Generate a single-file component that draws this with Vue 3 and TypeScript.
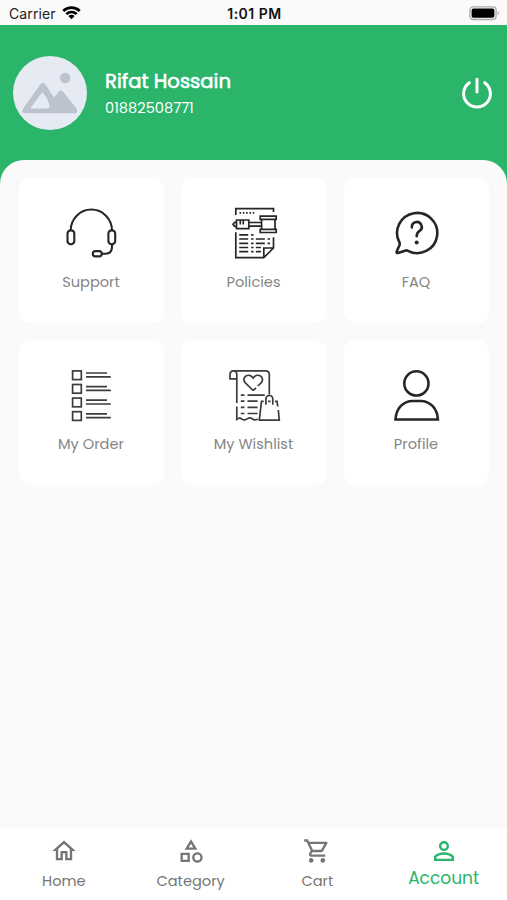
<script setup lang="ts">
import { ref } from 'vue'

interface Tile {
  id: string
  label: string
}

interface Tab {
  id: string
  label: string
  path: string
}

const tiles: Tile[] = [
  { id: 'support', label: 'Support' },
  { id: 'policies', label: 'Policies' },
  { id: 'faq', label: 'FAQ' },
  { id: 'order', label: 'My Order' },
  { id: 'wishlist', label: 'My Wishlist' },
  { id: 'profile', label: 'Profile' },
]

const tabs: Tab[] = [
  {
    id: 'home',
    label: 'Home',
    path: 'M12 5.69l5 4.5V18h-2v-6H9v6H7v-7.81l5-4.5M12 3L2 12h3v8h6v-6h2v6h6v-8h3L12 3z',
  },
  {
    id: 'category',
    label: 'Category',
    path: 'M12 2l-5.5 9h11L12 2zm0 3.84L13.93 9h-3.87L12 5.84zM17.5 13c-2.49 0-4.5 2.01-4.5 4.5s2.01 4.5 4.5 4.5 4.5-2.01 4.5-4.5-2.01-4.5-4.5-4.5zm0 7a2.5 2.5 0 0 1 0-5 2.5 2.5 0 0 1 0 5zM3 21.5h8v-8H3v8zm2-6h4v4H5v-4z',
  },
  {
    id: 'cart',
    label: 'Cart',
    path: 'M15.55 13c.75 0 1.41-.41 1.75-1.03l3.58-6.49A.996.996 0 0 0 20.01 4H5.21l-.94-2H1v2h2l3.6 7.59-1.35 2.44C4.52 15.37 5.48 17 7 17h12v-2H7l1.1-2h7.45zM6.16 6h12.15l-2.76 5H8.53L6.16 6zM7 18c-1.1 0-1.99.9-1.99 2S5.9 22 7 22s2-.9 2-2-.9-2-2-2zm10 0c-1.1 0-1.99.9-1.99 2s.89 2 1.99 2 2-.9 2-2-.9-2-2-2z',
  },
  {
    id: 'account',
    label: 'Account',
    path: 'M12 5.9a2.1 2.1 0 1 1 0 4.2 2.1 2.1 0 0 1 0-4.2m0 9c2.97 0 6.1 1.46 6.1 2.1v1.1H5.9V17c0-.64 3.13-2.1 6.1-2.1M12 4C9.79 4 8 5.79 8 8s1.79 4 4 4 4-1.79 4-4-1.79-4-4-4zm0 9c-2.67 0-8 1.34-8 4v3h16v-3c0-2.66-5.33-4-8-4z',
  },
]

const active = ref<string>('account')
</script>

<template>
  <div class="screen">
    <div class="status">
      <div class="carrier">
        <span>Carrier</span>
        <svg class="wifi" viewBox="0 0 18 14">
          <path d="M0.3 4.6A12.6 12.6 0 0 1 17.7 4.6L15.9 6.5A9.9 9.9 0 0 0 2.1 6.5Z" />
          <path d="M3.2 7.6A8.4 8.4 0 0 1 14.8 7.6L13 9.4A5.8 5.8 0 0 0 5 9.4Z" />
          <path d="M6 10.4A4.3 4.3 0 0 1 12 10.4L9 13.5Z" />
        </svg>
      </div>
      <span class="time">1:01 PM</span>
      <svg class="battery" viewBox="0 0 31 15">
        <rect x="0.9" y="0.9" width="26.2" height="12.6" rx="3.4" fill="#fafafa" stroke="#aaa" stroke-width="1.3" />
        <rect x="2.6" y="2.6" width="22.8" height="9.2" rx="1.8" fill="#000" />
        <path d="M28.6 5a2.6 2.6 0 0 1 0 4.4z" fill="#aaa" />
      </svg>
    </div>

    <header class="header">
      <svg class="avatar" viewBox="0 0 74 74">
        <circle cx="37" cy="37" r="37" fill="#e6eaf3" />
        <circle cx="52.2" cy="22" r="5.2" fill="#bcc3ce" />
        <path
          fill="#bcc3ce"
          fill-rule="evenodd"
          d="M27.5 28.3Q30 25 32.3 28.3L40.8 41.5L45.6 36Q48 33.2 50.3 36L63.4 52.2Q66 57 61.6 57.2H12Q7.8 57 10.2 52.4ZM29.3 36.2L17.2 52.5H35.2Q37 51.5 36.3 48.7Q34.6 41.5 29.3 36.2Z"
        />
      </svg>
      <div class="user">
        <div class="name">Rifat Hossain</div>
        <div class="phone">01882508771</div>
      </div>
      <svg class="power" viewBox="0 0 32 32">
        <path d="M8.3 5.7A13.4 13.4 0 1 0 23.7 5.7M16 2.2V15" />
      </svg>
    </header>

    <main class="sheet">
      <div class="grid">
        <div v-for="tile in tiles" :key="tile.id" class="tile">
          <svg class="icon" :class="tile.id" viewBox="0 0 56 56">
            <g v-if="tile.id === 'support'">
              <path d="M7.7 25.5A20.6 20.9 0 0 1 49 25.5M49 39.5V42Q49 48.7 42.5 48.7H39" />
              <rect x="4.5" y="25.4" width="6.8" height="13.8" rx="3.2" />
              <rect x="45.4" y="25.4" width="6.8" height="13.8" rx="3.2" />
              <rect x="29.8" y="46.1" width="9" height="5.3" rx="2.6" />
            </g>
            <g v-else-if="tile.id === 'policies'">
              <path d="M9.8 10V3.7H47.5V6.9M9.8 27.3V52.7H37.8L47.5 43V32.3M37.8 52.7V43H47.5" />
              <path d="M13.5 7.8H29.3" stroke-dasharray="1.6 1.7" />
              <path d="M10.5 17.3H8.6L7 19.3L8.6 21.3H10.5M10.5 15H22.8V23.7H10.5ZM14.3 15V19.5M17.3 15V19.5M22.8 17.5H35M22.8 21.2H35M35.6 14.3V24.3M49 14.3V24.3M34.2 11.2H50.2V14.3H34.2ZM34.2 24.3H50.2V27.5H34.2Z" />
              <path d="M13.2 29.8H22.2M25.1 29.8H27.5M13.2 34H22.2M25.1 34H27.5M29.8 34H38.8M41.6 34H44M13.2 38.3H22.2M25.1 38.3H27.5M29.8 38.3H38.8M41.6 38.3H44M13.2 42.5H22.2M25.1 42.5H27.5M29.8 42.5H34.9M13.2 46.7H22.2M25.1 46.7H27.5M29.8 46.7H34.9" />
            </g>
            <g v-else-if="tile.id === 'faq'">
              <path d="M11.3 37.2Q12 38.6 11.5 40.2L8.7 46.6Q8.4 48.3 10 48L17.8 45.4Q18.7 45.2 20 45.9A20.1 20.1 0 1 0 11.3 37.2Z" />
              <path d="M23.9 22.5A4.9 4.9 0 1 1 31.6 25.9Q28.7 27.8 28.7 31.2" />
              <circle class="dot" cx="28.7" cy="37.4" r="2" />
            </g>
            <g v-else-if="tile.id === 'order'">
              <template v-for="row in 4" :key="row">
                <rect x="9.6" :y="3.9 + (row - 1) * 13.6" width="8.7" height="8.7" />
                <path :d="`M23 ${6 + (row - 1) * 13.6}H44M23 ${9.8 + (row - 1) * 13.6}H47.8`" />
              </template>
            </g>
            <g v-else-if="tile.id === 'wishlist'">
              <path d="M10.8 11.8H4V7.6Q4 3.8 7.6 3.8H39.6Q43.3 3.8 43.3 7.5V27.5M7.6 3.8Q10.8 3.8 10.8 7.5V36M10.8 39.5V52.3Q13.5 49.8 16 52.2Q18.3 54 21.5 51.6Q24 49.8 26.5 52Q29 54 31.8 51.8" />
              <path d="M27.2 23.5L19.1 15.6C15 10.6 22.6 4.7 27.2 11.1C31.8 4.7 39.4 10.6 35.3 15.6L31.8 19M30 20.8L27.2 23.5" />
              <path d="M14.8 28.1H18.5M21.5 28.1H38.8M14.8 34.2H18.5M21.5 34.2H31.6M14.8 40.3H18.5M21.5 40.3H31.6M14.8 46.5H18.5M21.5 46.5H31.6" />
              <path d="M37.7 34.3H35.5L33.3 53.2H53.3L52.3 43M51.8 39.5L51 34.3H48.9M42.1 34.3H44.6M39.9 37.7V32.2Q39.9 28.5 43.4 28.5Q46.8 28.5 46.8 32.2V37.7" />
            </g>
            <g v-else>
              <circle cx="28.4" cy="16.4" r="12.1" />
              <path d="M7.5 52.5H49.9C49.3 41.8 42.5 34 32.5 34H24.8C14.8 34 8.1 41.8 7.5 52.5Z" />
            </g>
          </svg>
          <span class="label">{{ tile.label }}</span>
        </div>
      </div>
    </main>

    <nav class="tabs">
      <button
        v-for="tab in tabs"
        :key="tab.id"
        type="button"
        class="tab"
        :class="[tab.id, { active: active === tab.id }]"
        @click="active = tab.id"
      >
        <svg viewBox="0 0 24 24"><path :d="tab.path" /></svg>
        <span>{{ tab.label }}</span>
      </button>
    </nav>
  </div>
</template>

<style>
body {
  margin: 0;
  background: #fafafa;
}
</style>

<style scoped>
.screen {
  display: flex;
  flex-direction: column;
  width: 507px;
  height: 900px;
  overflow: hidden;
  background: #fafafa;
  font-family: Poppins, Inter, 'Open Sans', sans-serif;
}
.status {
  display: grid;
  grid-template-columns: 1fr auto 1fr;
  align-items: center;
  flex: none;
  box-sizing: border-box;
  height: 25px;
  padding: 2px 7px 0 9px;
  font-family: Inter, sans-serif;
  font-size: 14px;
  line-height: 20px;
  color: #222;
}
.carrier {
  display: flex;
  align-items: center;
  gap: 6px;
  letter-spacing: 0.1px;
}
.wifi {
  width: 19px;
  height: 15px;
  margin-top: -3px;
  fill: #000;
}
.time {
  font-weight: 600;
  letter-spacing: 0.5px;
  color: #111;
}
.battery {
  justify-self: end;
  width: 31px;
  height: 15px;
  margin-top: -1px;
}
.header {
  display: flex;
  align-items: center;
  flex: none;
  box-sizing: border-box;
  height: 160px;
  padding: 0 14px 25px 13px;
  background: #2ab56b;
  color: #fff;
}
.avatar {
  width: 74px;
  height: 74px;
}
.user {
  flex: 1;
  padding: 3px 0 0 18px;
}
.name {
  font-size: 19.6px;
  line-height: 28px;
  -webkit-text-stroke: 0.6px #fff;
}
.phone {
  font-size: 14.6px;
  line-height: 26px;
}
.power {
  width: 32px;
  height: 32px;
  fill: none;
  stroke: #fff;
  stroke-width: 3;
  stroke-linecap: round;
}
.sheet {
  flex: 1;
  margin-top: -25px;
  padding: 18px 18.5px 0;
  border-radius: 24px 24px 0 0;
  background: #fafafa;
}
.grid {
  display: grid;
  grid-template-columns: repeat(3, 145px);
  grid-auto-rows: 145px;
  gap: 17px 17.5px;
}
.tile {
  display: flex;
  flex-direction: column;
  align-items: center;
  box-sizing: border-box;
  padding-top: 27px;
  border-radius: 11px;
  background: #fff;
}
.icon {
  width: 56px;
  height: 56px;
  fill: none;
  stroke: #262626;
  stroke-width: 1.7;
}
.support {
  stroke-width: 2.1;
}
.faq,
.profile {
  stroke-width: 2.6;
}
.faq {
  stroke-linecap: round;
  stroke-linejoin: round;
}
.order,
.wishlist {
  stroke: #3c3c3c;
}
.dot {
  fill: #262626;
  stroke: none;
}
.label {
  margin-top: 10px;
  font-size: 14.6px;
  line-height: 22px;
  color: #858585;
}
.tabs {
  display: grid;
  grid-template-columns: repeat(4, 1fr);
  flex: none;
  height: 72px;
  background: #fff;
}
.tab {
  display: flex;
  flex-direction: column;
  align-items: center;
  padding: 9px 0 0 1px;
  border: 0;
  background: none;
  font: inherit;
  font-size: 14.6px;
  line-height: 22px;
  color: #757575;
}
.tab svg {
  width: 28px;
  height: 28px;
  fill: currentColor;
}
.tab span {
  margin-top: 5px;
}
.tab.active {
  padding: 8px 0 0;
  font-size: 17px;
  color: #2ab56b;
}
.tab.active svg {
  width: 30px;
  height: 30px;
}
.tab.active span {
  margin-top: 1px;
}
</style>
